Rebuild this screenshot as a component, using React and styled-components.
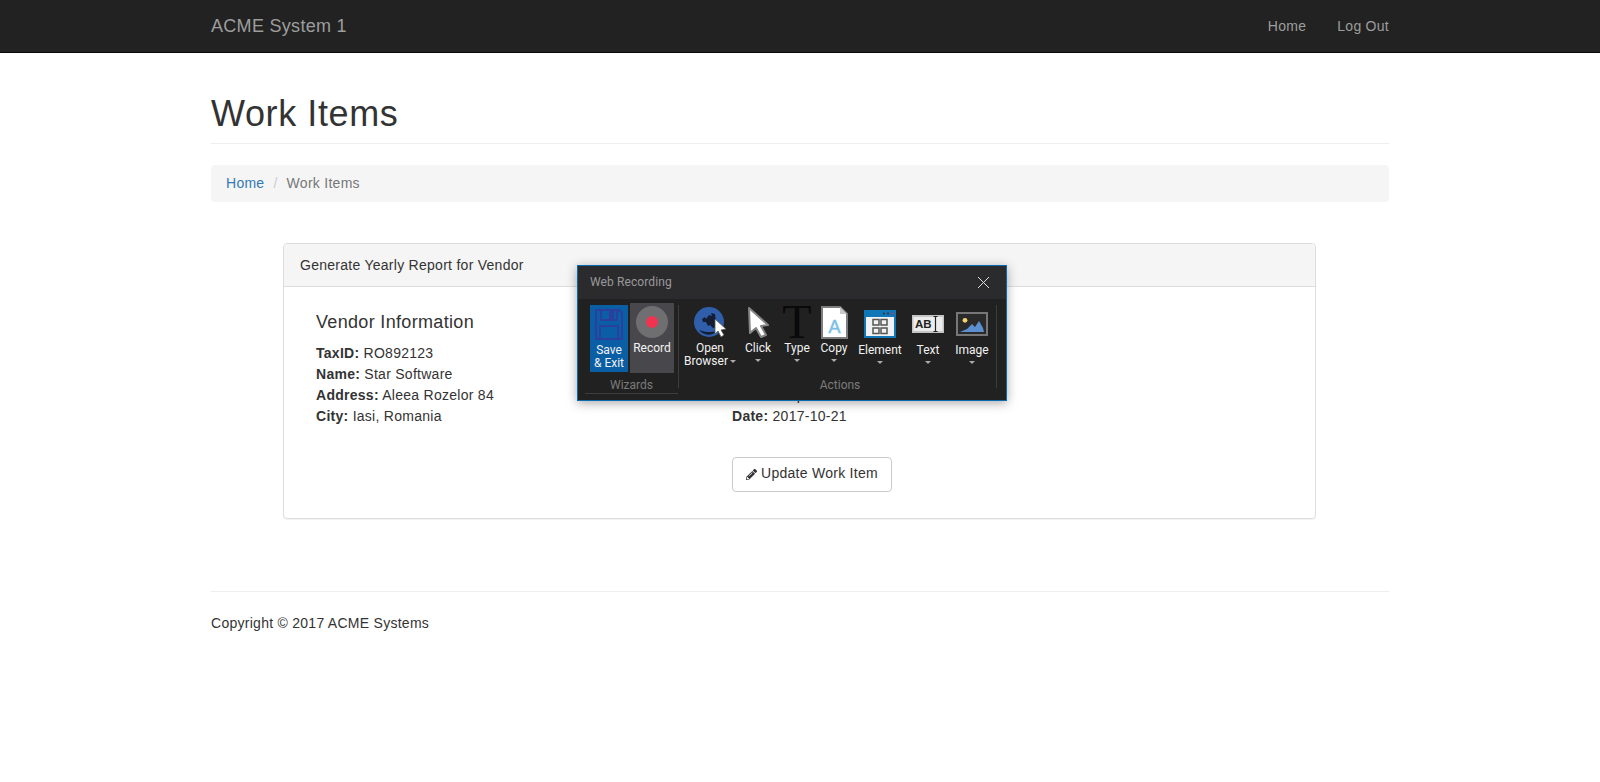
import React from 'react'
import styled, { createGlobalStyle } from 'styled-components'
import { FaPencilAlt } from 'react-icons/fa'

const Global = createGlobalStyle`
  * { box-sizing: border-box; }
  html, body { margin: 0; padding: 0; background: #fff; }
  body {
    font-family: "Liberation Sans", Arial, sans-serif;
    font-size: 14px;
    line-height: 1.42857;
    letter-spacing: 0.27px;
    color: #333;
  }
`

const Navbar = styled.nav`
  height: 53px;
  background: #222;
  border-bottom: 1px solid #080808;
`
const Wrap = styled.div`
  width: 1178px;
  margin: 0 auto;
`
const NavInner = styled(Wrap)`
  display: flex;
  align-items: center;
  justify-content: space-between;
  height: 52px;
  padding-top: 1px;
`
const Brand = styled.a`
  font-size: 18px;
  letter-spacing: 0.3px;
  color: #9d9d9d;
`
const NavLinks = styled.div`
  display: flex;
  gap: 31px;
`
const NavLink = styled.a`
  color: #9d9d9d;
`
const PageHeader = styled.div`
  margin-top: 41px;
  padding-bottom: 9px;
  border-bottom: 1px solid #eee;
`
const Title = styled.h1`
  margin: 0;
  font-size: 36px;
  font-weight: 500;
  line-height: 1.1;
  letter-spacing: 0.6px;
  color: #333;
`
const Breadcrumb = styled.div`
  display: flex;
  height: 37px;
  align-items: center;
  margin-top: 21px;
  padding: 1px 15px 0;
  background: #f5f5f5;
  border-radius: 4px;
`
const Crumb = styled.a`
  color: ${p => p.$active ? '#777' : '#337ab7'};
`
const Slash = styled.span`
  color: #ccc;
  padding: 0 9px;
`
const Panel = styled.section`
  position: relative;
  width: 1033px;
  height: 276px;
  margin: 41px 0 0 72px;
  border: 1px solid #ddd;
  border-radius: 4px;
  box-shadow: 0 1px 1px rgba(0, 0, 0, 0.05);
`
const PanelHead = styled.div`
  height: 43px;
  padding: 12px 16px 0;
  background: #f5f5f5;
  border-bottom: 1px solid #ddd;
  border-radius: 3px 3px 0 0;
`
const PanelBody = styled.div`
  display: grid;
  grid-template-columns: 416px 1fr;
  padding: 23px 32px 0;
`
const Vendor = styled.h3`
  margin: 0 0 8px;
  font-size: 18px;
  font-weight: 500;
  line-height: 25px;
  letter-spacing: 0.33px;
  color: #333;
`
const Line = styled.div`
  line-height: 21px;
`
const InfoSpacer = styled.div`
  height: 75px;
`
const Button = styled.button`
  display: inline-flex;
  align-items: center;
  gap: 4px;
  height: 35px;
  margin-top: 30px;
  padding: 0 13px;
  background: #fff;
  border: 1px solid #ccc;
  border-radius: 4px;
  font: inherit;
  letter-spacing: inherit;
  color: #333;
`
const Footer = styled(Wrap)`
  margin-top: 72px;
  padding-top: 22px;
  border-top: 1px solid #eee;
`

/* floating recorder toolbar that sits over the panel */
const Recorder = styled.div`
  position: absolute;
  left: 293px;
  top: 21px;
  width: 430px;
  height: 136px;
  background: #212121;
  border: 1px solid #0a6ab0;
  box-shadow: 0 2px 10px rgba(0, 0, 0, 0.35);
  font-family: Roboto, "Noto Sans", sans-serif;
  letter-spacing: 0;
  color: #eee;
`
const RecTitleBar = styled.div`
  display: flex;
  align-items: center;
  justify-content: space-between;
  height: 33px;
  padding: 0 16px 0 12px;
  background: #2b2b2e;
  font-size: 12px;
  letter-spacing: 0.1px;
  color: #999;
`
const Ribbon = styled.div`
  display: flex;
  height: 101px;
  padding: 4px 0 0 7px;
`
const Group = styled.div`
  position: relative;
  width: ${p => p.$w}px;
  padding-left: 5px;
`
const Divider = styled.div`
  position: absolute;
  right: 0;
  top: 2px;
  width: 1px;
  height: 83px;
  background: #3d3d3d;
`
const Tools = styled.div`
  display: flex;
  align-items: flex-start;
  height: 75px;
`
const Tool = styled.div`
  flex: none;
  display: flex;
  flex-direction: column;
  align-items: center;
  width: ${p => p.$w}px;
  height: ${p => p.$h || 70}px;
  margin: ${p => p.$mt || 0}px ${p => p.$mr || 0}px 0 0;
  padding-top: ${p => p.$pt || 0}px;
  background: ${p => p.$bg || 'transparent'};
  font-size: 12px;
  line-height: 13px;
  text-align: center;
  white-space: nowrap;
  color: #f2f2f2;
`
const ToolIcon = styled.div`
  flex: none;
  display: flex;
  align-items: center;
  justify-content: center;
  height: 39px;
`
const TypeGlyph = styled.span`
  display: block;
  height: 39px;
  font-family: "Liberation Serif", serif;
  font-size: 48px;
  line-height: 38px;
  color: #0a0a0a;
`
const Caret = styled.span`
  display: block;
  width: 0;
  height: 0;
  margin: 4px auto 0;
  border: 3px solid transparent;
  border-top: 3px solid #aaa;
  border-bottom: 0;
`
const InlineCaret = styled(Caret)`
  display: inline-block;
  margin: 0 0 2px 2px;
`
const GroupLabel = styled.div`
  margin-left: ${p => p.$line ? -5 : 0}px;
  margin-right: 1px;
  font-size: 12px;
  line-height: 15px;
  text-align: center;
  color: #7b7b7b;
  border-bottom: ${p => p.$line ? '1px solid #3d3d3d' : '0'};
`

const CloseX = () => (
  <svg width="13" height="13" viewBox="0 0 13 13" stroke="#ddd" strokeWidth="1">
    <path d="M1 1l11 11M12 1L1 12" />
  </svg>
)
const Floppy = () => (
  <svg width="30" height="33" viewBox="0 0 30 33" fill="none" stroke="#2b3f9c" strokeWidth="2">
    <path d="M2 2h23l3 3v26H2z" />
    <path d="M7 2v10h16V2" />
    <path d="M6 31V18h18v13" />
    <rect x="16" y="4" width="3" height="6" fill="#2b3f9c" />
  </svg>
)
const RecordDot = () => (
  <svg width="32" height="32" viewBox="0 0 32 32">
    <circle cx="16" cy="16" r="16" fill="#6f6f71" />
    <circle cx="16" cy="16" r="6" fill="#ef3350" />
  </svg>
)
const Cursor = () => (
  <svg width="23" height="32" viewBox="0 0 23 32">
    <path d="M2 2l19 17-7 1 5 9-5 2-5-9-6 5z" fill="#fff" stroke="#858585" strokeWidth="2" strokeLinejoin="round" />
  </svg>
)
const Globe = () => (
  <svg width="33" height="31" viewBox="0 0 33 31">
    <circle cx="15" cy="15" r="15" fill="#2f5fab" />
    <path d="M8 12l3-2 1 2 3-4 3 1-1-3 4 1 1 8 1 5-4 1-3-3-2 1-2-4-3 0z" fill="#141d33" />
    <path d="M5 23c5 2 11 3 18 1-5 5-13 5-18-1z" fill="#141d33" />
    <path d="M21 12l11 10-5 1 3 5-3 2-3-6-3 3z" fill="#fff" stroke="#555" strokeWidth="0.8" />
  </svg>
)
const CopyIcon = () => (
  <svg width="27" height="33" viewBox="0 0 27 33">
    <path d="M1 1h18l7 7v24H1z" fill="#fff" stroke="#7d7d7d" strokeWidth="2" />
    <path d="M19 1v7h7z" fill="#c9c9c9" />
    <text x="13.5" y="27" textAnchor="middle" fontFamily="Liberation Sans" fontSize="18" stroke="#7cc0ea" strokeWidth="0.5" fill="#7cc0ea">A</text>
  </svg>
)
const ElementIcon = () => (
  <svg width="32" height="28" viewBox="0 0 32 28">
    <rect width="32" height="28" fill="#0f76b8" />
    <rect x="2" y="7" width="28" height="19" fill="#f2f2f2" />
    <circle cx="20" cy="3.5" r="1" fill="#333" />
    <circle cx="24" cy="3.5" r="1" fill="#333" />
    <circle cx="28" cy="3.5" r="1" fill="#d9304a" />
    <g fill="none" stroke="#555" strokeWidth="1.5">
      <rect x="9" y="9.5" width="6" height="5.5" />
      <rect x="17" y="9.5" width="6" height="5.5" />
      <rect x="9" y="18" width="6" height="5.5" />
      <rect x="17" y="18" width="6" height="5.5" />
    </g>
  </svg>
)
const TextIcon = () => (
  <svg width="32" height="18" viewBox="0 0 32 18">
    <rect width="32" height="18" fill="#c4c4c4" />
    <rect x="1.5" y="2" width="29" height="14" fill="#ececec" />
    <text x="3" y="13" fontFamily="Liberation Sans" fontSize="11.5" fontWeight="700" fill="#222">AB</text>
    <path d="M21.5 1.5h4M21.5 16.5h4M23.5 1.5v15" stroke="#222" strokeWidth="1.2" fill="none" />
  </svg>
)
const ImageIcon = () => (
  <svg width="32" height="24" viewBox="0 0 32 24">
    <rect x="1" y="1" width="30" height="22" fill="#2a2a2a" stroke="#777" strokeWidth="2" />
    <circle cx="9" cy="8.3" r="2.4" fill="#f2d46b" />
    <path d="M4 20l7-3 5-5 3 3 4-6 4 7 1 4z" fill="#5b8fd0" />
  </svg>
)

const RecorderBar = () => (
  <Recorder>
    <RecTitleBar>
      <span>Web Recording</span>
      <CloseX />
    </RecTitleBar>
    <Ribbon>
      <Group $w={94}>
        <Tools>
          <Tool $w={38} $h={67} $mt={2} $mr={2} $bg="#0a5ea3">
            <ToolIcon><Floppy /></ToolIcon>
            Save<br />&amp; Exit
          </Tool>
          <Tool $w={44} $bg="#48484c">
            <ToolIcon><RecordDot /></ToolIcon>
            Record
          </Tool>
        </Tools>
        <GroupLabel $line>Wizards</GroupLabel>
        <Divider />
      </Group>
      <Group $w={318}>
        <Tools>
          <Tool $w={52}><ToolIcon><Globe /></ToolIcon>Open<br /><span>Browser<InlineCaret /></span></Tool>
          <Tool $w={44}><ToolIcon><Cursor /></ToolIcon>Click<Caret /></Tool>
          <Tool $w={34}><ToolIcon><TypeGlyph>T</TypeGlyph></ToolIcon>Type<Caret /></Tool>
          <Tool $w={40}><ToolIcon><CopyIcon /></ToolIcon>Copy<Caret /></Tool>
          <Tool $w={52} $pt={2}><ToolIcon><ElementIcon /></ToolIcon>Element<Caret /></Tool>
          <Tool $w={44} $pt={2}><ToolIcon><TextIcon /></ToolIcon>Text<Caret /></Tool>
          <Tool $w={44} $pt={2}><ToolIcon><ImageIcon /></ToolIcon>Image<Caret /></Tool>
        </Tools>
        <GroupLabel>Actions</GroupLabel>
        <Divider />
      </Group>
    </Ribbon>
  </Recorder>
)

export default function App() {
  return (
    <>
      <Global />
      <Navbar>
        <NavInner>
          <Brand>ACME System 1</Brand>
          <NavLinks>
            <NavLink>Home</NavLink>
            <NavLink>Log Out</NavLink>
          </NavLinks>
        </NavInner>
      </Navbar>
      <Wrap>
        <PageHeader><Title>Work Items</Title></PageHeader>
        <Breadcrumb>
          <Crumb>Home</Crumb>
          <Slash>/</Slash>
          <Crumb $active>Work Items</Crumb>
        </Breadcrumb>
        <Panel>
          <PanelHead>Generate Yearly Report for Vendor</PanelHead>
          <PanelBody>
            <div>
              <Vendor>Vendor Information</Vendor>
              <Line><b>TaxID:</b> RO892123</Line>
              <Line><b>Name:</b> Star Software</Line>
              <Line><b>Address:</b> Aleea Rozelor 84</Line>
              <Line><b>City:</b> Iasi, Romania</Line>
            </div>
            <div>
              <InfoSpacer />
              <Line><b>Status:</b> Open</Line>
              <Line><b>Date:</b> 2017-10-21</Line>
              <Button><FaPencilAlt size={11} /> Update Work Item</Button>
            </div>
          </PanelBody>
          <RecorderBar />
        </Panel>
      </Wrap>
      <Footer>Copyright © 2017 ACME Systems</Footer>
    </>
  )
}
